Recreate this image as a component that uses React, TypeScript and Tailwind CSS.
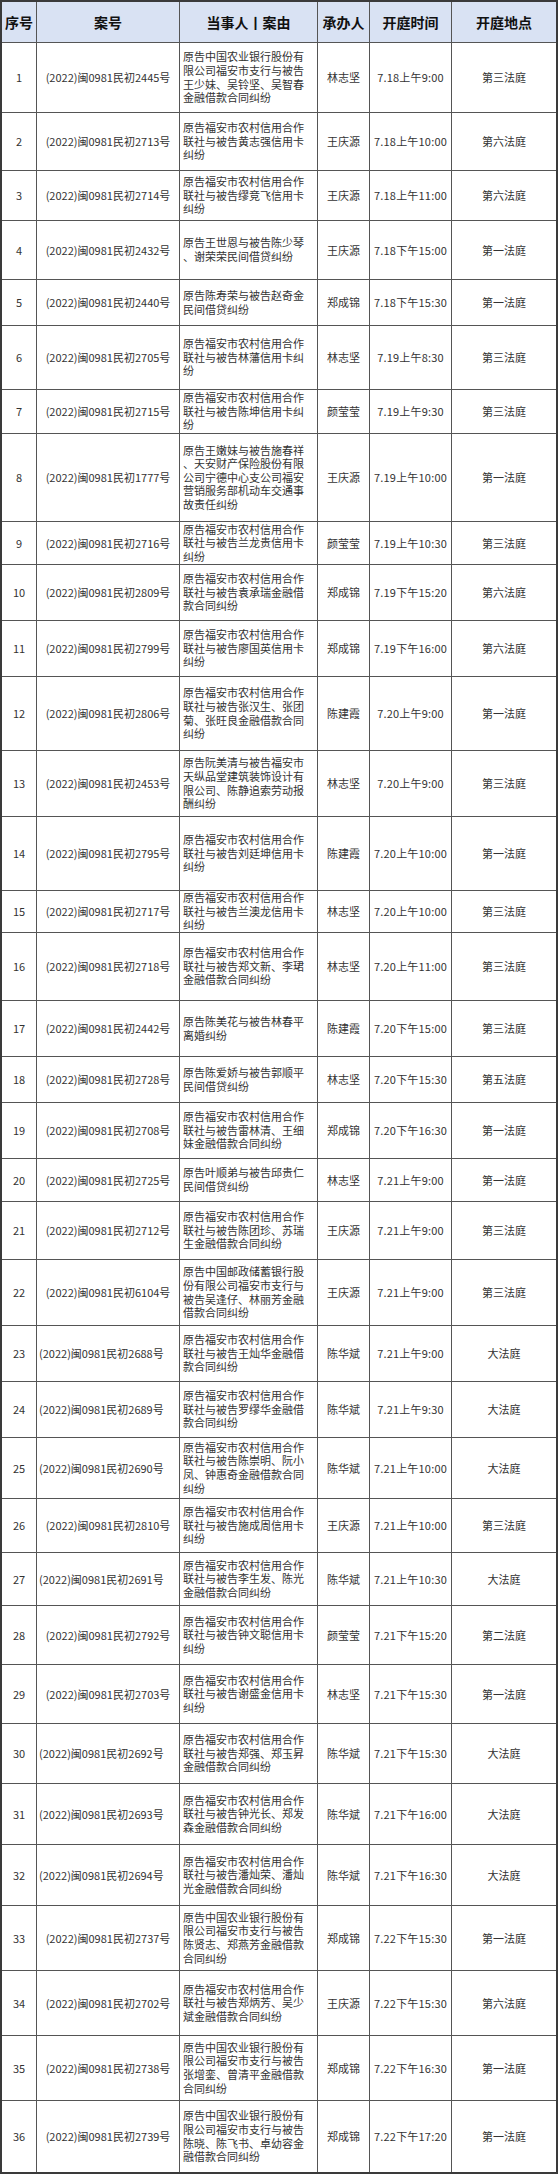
type Row = {
  no: number
  caseNo: string
  left?: boolean
  lines: string[]
  judge: string
  time: string
  room: string
  h: number
}

const rows: Row[] = [
  { no: 1, caseNo: '2445', lines: ['原告中国农业银行股份有', '限公司福安市支行与被告', '王少妹、吴铃坚、吴智春', '金融借款合同纠纷'], judge: '林志坚', time: '7.18上午9:00', room: '第三法庭', h: 70 },
  { no: 2, caseNo: '2713', lines: ['原告福安市农村信用合作', '联社与被告黄志强信用卡', '纠纷'], judge: '王庆源', time: '7.18上午10:00', room: '第六法庭', h: 58 },
  { no: 3, caseNo: '2714', lines: ['原告福安市农村信用合作', '联社与被告缪竞飞信用卡', '纠纷'], judge: '王庆源', time: '7.18上午11:00', room: '第六法庭', h: 50 },
  { no: 4, caseNo: '2432', lines: ['原告王世恩与被告陈少琴', '、谢荣荣民间借贷纠纷'], judge: '王庆源', time: '7.18下午15:00', room: '第一法庭', h: 59 },
  { no: 5, caseNo: '2440', lines: ['原告陈寿荣与被告赵奇金', '民间借贷纠纷'], judge: '郑成锦', time: '7.18下午15:30', room: '第一法庭', h: 46 },
  { no: 6, caseNo: '2705', lines: ['原告福安市农村信用合作', '联社与被告林藩信用卡纠', '纷'], judge: '林志坚', time: '7.19上午8:30', room: '第三法庭', h: 64 },
  { no: 7, caseNo: '2715', lines: ['原告福安市农村信用合作', '联社与被告陈坤信用卡纠', '纷'], judge: '颜莹莹', time: '7.19上午9:30', room: '第三法庭', h: 44 },
  { no: 8, caseNo: '1777', lines: ['原告王嫩妹与被告施春祥', '、天安财产保险股份有限', '公司宁德中心支公司福安', '营销服务部机动车交通事', '故责任纠纷'], judge: '王庆源', time: '7.19上午10:00', room: '第一法庭', h: 88 },
  { no: 9, caseNo: '2716', lines: ['原告福安市农村信用合作', '联社与被告兰龙贵信用卡', '纠纷'], judge: '颜莹莹', time: '7.19上午10:30', room: '第三法庭', h: 43 },
  { no: 10, caseNo: '2809', lines: ['原告福安市农村信用合作', '联社与被告袁承瑞金融借', '款合同纠纷'], judge: '郑成锦', time: '7.19下午15:20', room: '第六法庭', h: 56 },
  { no: 11, caseNo: '2799', lines: ['原告福安市农村信用合作', '联社与被告廖国英信用卡', '纠纷'], judge: '郑成锦', time: '7.19下午16:00', room: '第六法庭', h: 56 },
  { no: 12, caseNo: '2806', lines: ['原告福安市农村信用合作', '联社与被告张汉生、张团', '菊、张旺良金融借款合同', '纠纷'], judge: '陈建霞', time: '7.20上午9:00', room: '第一法庭', h: 74 },
  { no: 13, caseNo: '2453', lines: ['原告阮美清与被告福安市', '天纵品堂建筑装饰设计有', '限公司、陈静追索劳动报', '酬纠纷'], judge: '林志坚', time: '7.20上午9:00', room: '第三法庭', h: 66 },
  { no: 14, caseNo: '2795', lines: ['原告福安市农村信用合作', '联社与被告刘廷坤信用卡', '纠纷'], judge: '陈建霞', time: '7.20上午10:00', room: '第一法庭', h: 74 },
  { no: 15, caseNo: '2717', lines: ['原告福安市农村信用合作', '联社与被告兰澳龙信用卡', '纠纷'], judge: '林志坚', time: '7.20上午10:00', room: '第三法庭', h: 42 },
  { no: 16, caseNo: '2718', lines: ['原告福安市农村信用合作', '联社与被告郑文新、李珺', '金融借款合同纠纷'], judge: '林志坚', time: '7.20上午11:00', room: '第三法庭', h: 68 },
  { no: 17, caseNo: '2442', lines: ['原告陈美花与被告林春平', '离婚纠纷'], judge: '陈建霞', time: '7.20下午15:00', room: '第三法庭', h: 56 },
  { no: 18, caseNo: '2728', lines: ['原告陈爱娇与被告郭顺平', '民间借贷纠纷'], judge: '林志坚', time: '7.20下午15:30', room: '第五法庭', h: 46 },
  { no: 19, caseNo: '2708', lines: ['原告福安市农村信用合作', '联社与被告雷林清、王细', '妹金融借款合同纠纷'], judge: '郑成锦', time: '7.20下午16:30', room: '第一法庭', h: 56 },
  { no: 20, caseNo: '2725', lines: ['原告叶顺弟与被告邱贵仁', '民间借贷纠纷'], judge: '林志坚', time: '7.21上午9:00', room: '第一法庭', h: 43 },
  { no: 21, caseNo: '2712', lines: ['原告福安市农村信用合作', '联社与被告陈团珍、苏瑞', '生金融借款合同纠纷'], judge: '王庆源', time: '7.21上午9:00', room: '第三法庭', h: 58 },
  { no: 22, caseNo: '6104', lines: ['原告中国邮政储蓄银行股', '份有限公司福安市支行与', '被告吴逢仔、林丽芳金融', '借款合同纠纷'], judge: '王庆源', time: '7.21上午9:00', room: '第三法庭', h: 66 },
  { no: 23, caseNo: '2688', left: true, lines: ['原告福安市农村信用合作', '联社与被告王灿华金融借', '款合同纠纷'], judge: '陈华斌', time: '7.21上午9:00', room: '大法庭', h: 56 },
  { no: 24, caseNo: '2689', left: true, lines: ['原告福安市农村信用合作', '联社与被告罗缪华金融借', '款合同纠纷'], judge: '陈华斌', time: '7.21上午9:30', room: '大法庭', h: 56 },
  { no: 25, caseNo: '2690', left: true, lines: ['原告福安市农村信用合作', '联社与被告陈崇明、阮小', '凤、钟惠奇金融借款合同', '纠纷'], judge: '陈华斌', time: '7.21上午10:00', room: '大法庭', h: 61 },
  { no: 26, caseNo: '2810', lines: ['原告福安市农村信用合作', '联社与被告施成周信用卡', '纠纷'], judge: '王庆源', time: '7.21上午10:00', room: '第三法庭', h: 54 },
  { no: 27, caseNo: '2691', left: true, lines: ['原告福安市农村信用合作', '联社与被告李生发、陈光', '金融借款合同纠纷'], judge: '陈华斌', time: '7.21上午10:30', room: '大法庭', h: 53 },
  { no: 28, caseNo: '2792', lines: ['原告福安市农村信用合作', '联社与被告钟文聪信用卡', '纠纷'], judge: '颜莹莹', time: '7.21下午15:20', room: '第二法庭', h: 59 },
  { no: 29, caseNo: '2703', lines: ['原告福安市农村信用合作', '联社与被告谢盛金信用卡', '纠纷'], judge: '林志坚', time: '7.21下午15:30', room: '第一法庭', h: 59 },
  { no: 30, caseNo: '2692', left: true, lines: ['原告福安市农村信用合作', '联社与被告郑强、郑玉昇', '金融借款合同纠纷'], judge: '陈华斌', time: '7.21下午15:30', room: '大法庭', h: 60 },
  { no: 31, caseNo: '2693', left: true, lines: ['原告福安市农村信用合作', '联社与被告钟光长、郑发', '森金融借款合同纠纷'], judge: '陈华斌', time: '7.21下午16:00', room: '大法庭', h: 61 },
  { no: 32, caseNo: '2694', left: true, lines: ['原告福安市农村信用合作', '联社与被告潘灿荣、潘灿', '光金融借款合同纠纷'], judge: '陈华斌', time: '7.21下午16:30', room: '大法庭', h: 61 },
  { no: 33, caseNo: '2737', lines: ['原告中国农业银行股份有', '限公司福安市支行与被告', '陈贤志、郑燕芳金融借款', '合同纠纷'], judge: '郑成锦', time: '7.22下午15:30', room: '第一法庭', h: 65 },
  { no: 34, caseNo: '2702', lines: ['原告福安市农村信用合作', '联社与被告郑炳芳、吴少', '斌金融借款合同纠纷'], judge: '王庆源', time: '7.22下午15:30', room: '第六法庭', h: 65 },
  { no: 35, caseNo: '2738', lines: ['原告中国农业银行股份有', '限公司福安市支行与被告', '张增銮、曾清平金融借款', '合同纠纷'], judge: '郑成锦', time: '7.22下午16:30', room: '第一法庭', h: 65 },
  { no: 36, caseNo: '2739', lines: ['原告中国农业银行股份有', '限公司福安市支行与被告', '陈晓、陈飞书、卓幼容金', '融借款合同纠纷'], judge: '郑成锦', time: '7.22下午17:20', room: '第一法庭', h: 72 },
]

const gridCols = 'grid grid-cols-[35px_143px_138px_52px_82px_1fr]'
const cell = 'flex items-center border-r border-[#555]'

export default function App() {
  return (
    <div
      className="w-[558px] bg-white text-[#333]"
      style={{ fontFamily: "'Noto Sans CJK SC', 'Noto Sans', sans-serif" }}
    >
      <div className="border-2 border-[#3a3a3a]">
        {/* header */}
        <div className={`${gridCols} h-[41px] border-b border-[#555] bg-[#d9e2f3] text-[14px] font-bold text-[#111]`}>
          <div className={`${cell} justify-center`}>序号</div>
          <div className={`${cell} justify-center`}>案号</div>
          <div className={`${cell} justify-center`}>当事人丨案由</div>
          <div className={`${cell} justify-center`}>承办人</div>
          <div className={`${cell} justify-center`}>开庭时间</div>
          <div className="flex items-center justify-center">开庭地点</div>
        </div>

        {rows.map((r, i) => (
          <div
            key={r.no}
            className={`${gridCols} text-[11px] ${i < rows.length - 1 ? 'border-b border-[#555]' : ''}`}
            style={{ height: i < rows.length - 1 ? r.h : r.h - 1 }}
          >
            <div className={`${cell} justify-center`}>{r.no}</div>
            <div className={`${cell} ${r.left ? 'justify-start pl-[2px]' : 'justify-center'} whitespace-nowrap`}>
              (2022)闽0981民初{r.caseNo}号
            </div>
            <div className={`${cell} pl-[3px]`}>
              <div className="flex flex-col leading-[13.6px] whitespace-nowrap">
                {r.lines.map((l) => (
                  <span key={l}>{l}</span>
                ))}
              </div>
            </div>
            <div className={`${cell} justify-center`}>{r.judge}</div>
            <div className={`${cell} justify-center whitespace-nowrap tracking-[0.2px]`}>{r.time}</div>
            <div className="flex items-center justify-center">{r.room}</div>
          </div>
        ))}
      </div>
    </div>
  )
}
